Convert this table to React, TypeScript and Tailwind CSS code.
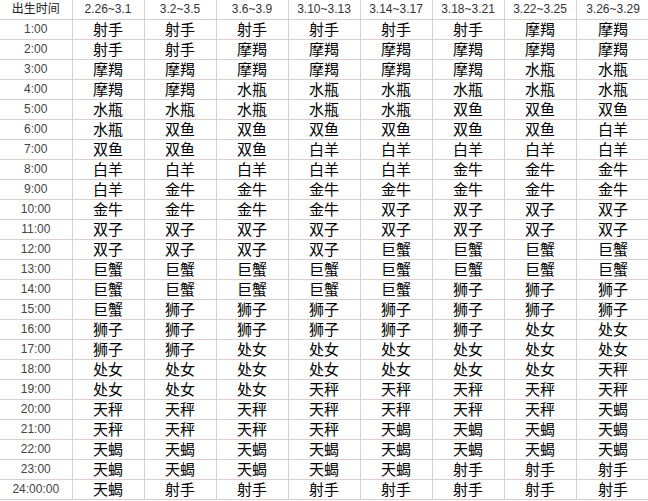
import React from 'react';

const periods = ['2.26~3.1', '3.2~3.5', '3.6~3.9', '3.10~3.13', '3.14~3.17', '3.18~3.21', '3.22~3.25', '3.26~3.29'];

const rows: [string, string[]][] = [
  ['1:00', ['射手', '射手', '射手', '射手', '射手', '射手', '摩羯', '摩羯']],
  ['2:00', ['射手', '射手', '摩羯', '摩羯', '摩羯', '摩羯', '摩羯', '摩羯']],
  ['3:00', ['摩羯', '摩羯', '摩羯', '摩羯', '摩羯', '摩羯', '水瓶', '水瓶']],
  ['4:00', ['摩羯', '摩羯', '水瓶', '水瓶', '水瓶', '水瓶', '水瓶', '水瓶']],
  ['5:00', ['水瓶', '水瓶', '水瓶', '水瓶', '水瓶', '双鱼', '双鱼', '双鱼']],
  ['6:00', ['水瓶', '双鱼', '双鱼', '双鱼', '双鱼', '双鱼', '双鱼', '白羊']],
  ['7:00', ['双鱼', '双鱼', '双鱼', '白羊', '白羊', '白羊', '白羊', '白羊']],
  ['8:00', ['白羊', '白羊', '白羊', '白羊', '白羊', '金牛', '金牛', '金牛']],
  ['9:00', ['白羊', '金牛', '金牛', '金牛', '金牛', '金牛', '金牛', '金牛']],
  ['10:00', ['金牛', '金牛', '金牛', '金牛', '双子', '双子', '双子', '双子']],
  ['11:00', ['双子', '双子', '双子', '双子', '双子', '双子', '双子', '双子']],
  ['12:00', ['双子', '双子', '双子', '双子', '巨蟹', '巨蟹', '巨蟹', '巨蟹']],
  ['13:00', ['巨蟹', '巨蟹', '巨蟹', '巨蟹', '巨蟹', '巨蟹', '巨蟹', '巨蟹']],
  ['14:00', ['巨蟹', '巨蟹', '巨蟹', '巨蟹', '巨蟹', '狮子', '狮子', '狮子']],
  ['15:00', ['巨蟹', '狮子', '狮子', '狮子', '狮子', '狮子', '狮子', '狮子']],
  ['16:00', ['狮子', '狮子', '狮子', '狮子', '狮子', '狮子', '处女', '处女']],
  ['17:00', ['狮子', '狮子', '处女', '处女', '处女', '处女', '处女', '处女']],
  ['18:00', ['处女', '处女', '处女', '处女', '处女', '处女', '处女', '天秤']],
  ['19:00', ['处女', '处女', '处女', '天秤', '天秤', '天秤', '天秤', '天秤']],
  ['20:00', ['天秤', '天秤', '天秤', '天秤', '天秤', '天秤', '天秤', '天蝎']],
  ['21:00', ['天秤', '天秤', '天秤', '天秤', '天蝎', '天蝎', '天蝎', '天蝎']],
  ['22:00', ['天蝎', '天蝎', '天蝎', '天蝎', '天蝎', '天蝎', '天蝎', '天蝎']],
  ['23:00', ['天蝎', '天蝎', '天蝎', '天蝎', '天蝎', '射手', '射手', '射手']],
  ['24:00:00', ['天蝎', '射手', '射手', '射手', '射手', '射手', '射手', '射手']],
];

const App: React.FC = () => {
  return (
    <div className="w-[648px] h-[501px] bg-white overflow-hidden" style={{ fontFamily: '"Liberation Sans", "Noto Sans CJK SC", sans-serif' }}>
      <table className="w-[648px] table-fixed border-collapse">
        <colgroup>
          <col className="w-[72px]" />
          {periods.map((p, i) => (
            <col key={p} className={i === periods.length - 1 ? 'w-[74px]' : 'w-[72px]'} />
          ))}
        </colgroup>
        <thead>
          <tr className="h-[19px]">
            <th className="p-0 font-normal text-[12px] leading-none text-[#222] text-center border-r border-b border-[#ddcfcf]">出生时间</th>
            {periods.map((p) => (
              <th key={p} className="p-0 font-normal text-[12px] leading-none text-[#333] text-center border-r border-b border-[#ddcfcf]">
                {p}
              </th>
            ))}
          </tr>
        </thead>
        <tbody>
          {rows.map(([time, signs]) => (
            <tr key={time} className="h-[20px]">
              <td className="p-0 text-[12px] leading-none text-[#444] text-center border-r border-b border-[#ddcfcf]">{time}</td>
              {signs.map((s, i) => (
                <td key={i} className="p-0 text-[15px] leading-none text-black text-center border-r border-b border-[#ddcfcf]">
                  {s}
                </td>
              ))}
            </tr>
          ))}
        </tbody>
      </table>
    </div>
  );
};

export default App;
